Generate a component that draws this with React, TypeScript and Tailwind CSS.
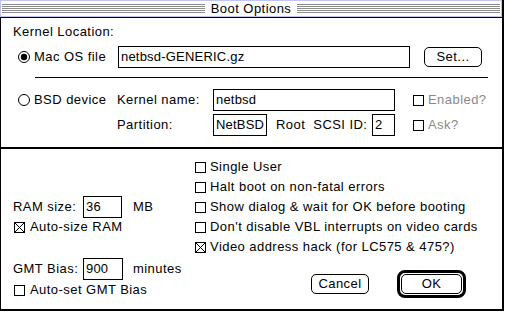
import React from 'react'

const FONT = "font-['Liberation_Sans',Arial,sans-serif]"

function Radio({ on }: { on?: boolean }) {
  return (
    <svg width="12" height="12" viewBox="0 0 12 12" className="shrink-0">
      <circle cx="6" cy="6" r="5.5" fill="white" stroke="black" strokeWidth="1" />
      {on && <circle cx="6" cy="6" r="3.2" fill="black" />}
    </svg>
  )
}

function Check({ on }: { on?: boolean }) {
  return (
    <svg width="11" height="11" viewBox="0 0 11 11" className="shrink-0" shapeRendering="crispEdges">
      <rect x="0.5" y="0.5" width="10" height="10" fill="white" stroke="black" />
      {on && <path d="M1 1L10 10M10 1L1 10" stroke="black" strokeWidth="1" shapeRendering="auto" />}
    </svg>
  )
}

function Field({ value, w }: { value: string; w: string }) {
  return (
    <div className={`${w} h-[22px] border border-black flex items-center px-[2px] shrink-0 tracking-[0.2px]`}>
      {value}
    </div>
  )
}

function CheckRow({ on, label, dim }: { on?: boolean; label: string; dim?: boolean }) {
  return (
    <div className="flex items-center h-[20px]">
      <Check on={on} />
      <span className={`ml-[4px] ${dim ? 'text-[#8a8a8a]' : ''}`}>{label}</span>
    </div>
  )
}

export default function App() {
  return (
    <div className={`w-[505px] h-[312px] bg-white text-black text-[13px] leading-4 tracking-[0.45px] ${FONT}`}>
      <div className="w-[504px] h-[311px] flex flex-col border-r-2 border-b-2 border-black">

        {/* ── Title bar ─────────────────────────── */}
        <div className="h-[17px] border border-[#c4c4f4] bg-[repeating-linear-gradient(to_bottom,#ffffff_0px,#ffffff_1px,#8c8c8c_1px,#8c8c8c_2px)] bg-clip-content py-[2px] px-[1px] flex justify-center items-center">
          <span className="bg-white px-[6px] h-[13px] leading-[13px] -mt-[1px]">Boot Options</span>
        </div>
        <div className="h-px bg-black" />

        <div className="flex-1 flex flex-col border-l border-black">

          {/* ── Kernel location ─────────────────── */}
          <div className="mt-[6px] h-[16px] pl-[12px]">Kernel Location:</div>

          <div className="mt-[6px] h-[22px] flex items-center pl-[17px]">
            <Radio on />
            <span className="ml-[4px] w-[84px]">Mac OS file</span>
            <Field value="netbsd-GENERIC.gz" w="w-[292px]" />
            <button className="ml-[14px] w-[58px] h-[20px] border border-black rounded-[5px] flex items-center justify-center">
              Set...
            </button>
          </div>

          <div className="mt-[9px] ml-[34px] w-[453px] h-px bg-black" />

          <div className="mt-[11px] h-[22px] flex items-center pl-[17px]">
            <Radio />
            <span className="ml-[4px] w-[83px]">BSD device</span>
            <span className="w-[96px]">Kernel name:</span>
            <Field value="netbsd" w="w-[182px]" />
            <div className="ml-[18px]"><CheckRow label="Enabled?" dim /></div>
          </div>

          <div className="mt-[3px] h-[22px] flex items-center pl-[116px]">
            <span className="w-[96px]">Partition:</span>
            <Field value="NetBSD" w="w-[54px]" />
            <span className="ml-[9px] w-[96px] flex gap-[8px]">
              <span>Root</span>
              <span>SCSI ID:</span>
            </span>
            <Field value="2" w="w-[23px]" />
            <div className="ml-[18px]"><CheckRow label="Ask?" dim /></div>
          </div>

          <div className="mt-[11px] h-[2px] bg-black" />

          {/* ── Options ─────────────────────────── */}
          <div className="flex flex-1">
            <div className="w-[194px] pl-[12px] flex flex-col">
              <div className="mt-[47px] h-[22px] flex items-center">
                <span className="w-[70px]">RAM size:</span>
                <Field value="36" w="w-[39px]" />
                <span className="ml-[11px]">MB</span>
              </div>
              <div className="mt-[1px] h-[16px] flex items-center pl-[1px]">
                <Check on />
                <span className="ml-[5px]">Auto-size RAM</span>
              </div>
              <div className="mt-[23px] h-[22px] flex items-center">
                <span className="w-[70px]">GMT Bias:</span>
                <Field value="900" w="w-[40px]" />
                <span className="ml-[10px]">minutes</span>
              </div>
              <div className="mt-[2px] h-[16px] flex items-center pl-[1px]">
                <Check />
                <span className="ml-[5px]">Auto-set GMT Bias</span>
              </div>
            </div>

            <div className="flex flex-col pt-[8px]">
              <CheckRow label="Single User" />
              <CheckRow label="Halt boot on non-fatal errors" />
              <CheckRow label="Show dialog & wait for OK before booting" />
              <CheckRow label="Don't disable VBL interrupts on video cards" />
              <CheckRow on label="Video address hack (for LC575 & 475?)" />

              <div className="mt-[13px] h-[28px] flex items-center">
                <button className="ml-[116px] w-[58px] h-[20px] border border-black rounded-[5px] flex items-center justify-center">
                  Cancel
                </button>
                <div className="ml-[28px] w-[69px] h-[28px] border-[3px] border-black rounded-[8px] p-px">
                  <button className="w-full h-full border border-black rounded-[5px] flex items-center justify-center">
                    OK
                  </button>
                </div>
              </div>
            </div>
          </div>
        </div>
      </div>
    </div>
  )
}
